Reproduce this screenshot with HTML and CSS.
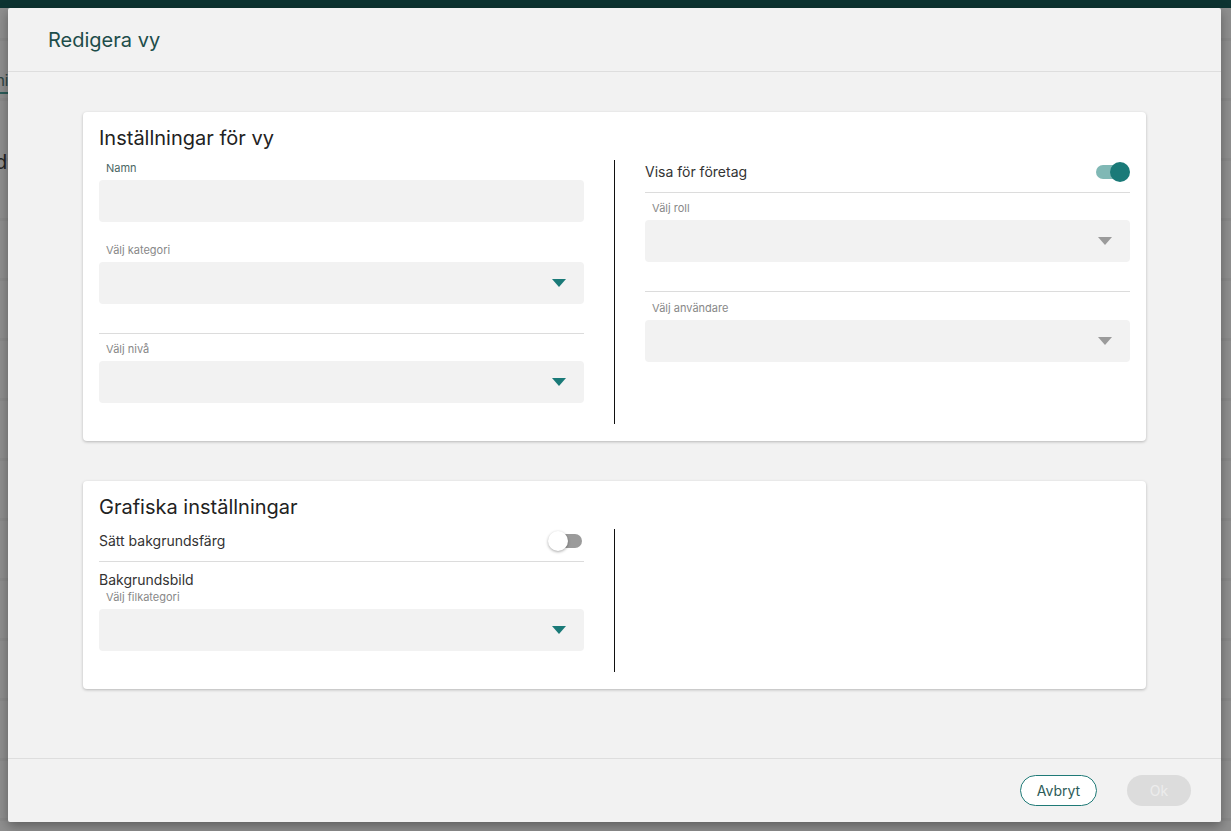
FILE: index.html
```html
<!DOCTYPE html>
<html lang="sv">
<head>
<meta charset="utf-8">
<title>Redigera vy</title>
<link rel="stylesheet" href="styles.css">
</head>
<body>
<div class="page">
  <div class="topbar"></div>
  <div class="behind">
    <span class="frag frag-t">t</span>
    <span class="frag frag-ni">ni</span>
    <span class="frag frag-d">d</span>
  </div>
</div>

<div class="modal">
  <div class="modal-header">Redigera vy</div>
  <div class="modal-body">
    <section class="card">
      <h2 class="card-title">Inställningar för vy</h2>
      <div class="card-row">
        <div class="col">
          <div class="field">
            <div class="label label-focus">Namn</div>
            <div class="input"></div>
          </div>
          <div class="field field-lined">
            <div class="label">Välj kategori</div>
            <div class="input select"><span class="caret teal"></span></div>
          </div>
          <div class="field">
            <div class="label">Välj nivå</div>
            <div class="input select"><span class="caret teal"></span></div>
          </div>
        </div>
        <div class="divider"></div>
        <div class="col">
          <div class="toggle-row">
            <span class="toggle-text">Visa för företag</span>
            <span class="toggle on"><span class="knob"></span></span>
          </div>
          <div class="field field-lined">
            <div class="label">Välj roll</div>
            <div class="input select"><span class="caret gray"></span></div>
          </div>
          <div class="field field-after-line">
            <div class="label">Välj användare</div>
            <div class="input select"><span class="caret gray"></span></div>
          </div>
        </div>
      </div>
    </section>

    <section class="card">
      <h2 class="card-title">Grafiska inställningar</h2>
      <div class="card-row">
        <div class="col">
          <div class="toggle-row toggle-row-spaced">
            <span class="toggle-text">Sätt bakgrundsfärg</span>
            <span class="toggle off"><span class="knob"></span></span>
          </div>
          <div class="sub-title">Bakgrundsbild</div>
          <div class="field field-tight">
            <div class="label">Välj filkategori</div>
            <div class="input select"><span class="caret teal"></span></div>
          </div>
        </div>
        <div class="divider"></div>
        <div class="col"></div>
      </div>
    </section>
  </div>
  <div class="modal-footer">
    <button class="btn btn-outline">Avbryt</button>
    <button class="btn btn-disabled">Ok</button>
  </div>
</div>
</body>
</html>
```

FILE: styles.css
```css
* { box-sizing: border-box; }

html, body {
  margin: 0;
  height: 100%;
}

body {
  background: #8d8d8d;
  font-family: Inter, "Noto Sans", "Liberation Sans", sans-serif;
  overflow: hidden;
  position: relative;
}

.page {
  height: 100%;
}

.topbar {
  height: 8px;
  background: #0d3331;
}

.behind {
  position: relative;
  height: calc(100% - 8px);
  background:
    repeating-linear-gradient(180deg, #8f8f8f 0 30px, #8a8a8a 30px 33px, #8f8f8f 33px 60px);
}

.frag {
  position: absolute;
  left: -2px;
  color: #3a3a3a;
}

.frag-t {
  top: 28px;
  font-size: 14px;
  left: -5px;
  color: #555;
}

.frag-ni {
  top: 63px;
  font-size: 15px;
  left: -4px;
  color: #2b4543;
  padding-bottom: 2px;
  border-bottom: 2px solid #2b5c59;
}

.frag-d {
  top: 142px;
  font-size: 20px;
  left: -5px;
  color: #222;
}

.modal {
  position: absolute;
  left: 8px;
  top: 8px;
  width: 1213px;
  height: 814px;
  background: #f2f2f2;
  display: flex;
  flex-direction: column;
  box-shadow: 0 4px 12px rgba(0, 0, 0, 0.35);
  border-radius: 2px;
}

.modal-header {
  height: 64px;
  padding: 0 40px;
  display: flex;
  align-items: center;
  font-size: 20px;
  color: #1d4d4a;
  border-bottom: 1px solid #dedede;
}

.modal-body {
  flex: 1;
  padding: 40px 75px 0;
  display: flex;
  flex-direction: column;
  gap: 40px;
}

.card {
  background: #fff;
  border-radius: 4px;
  box-shadow: 0 1px 3px rgba(0, 0, 0, 0.25);
  padding: 14px 16px 17px 16px;
}

.card-title {
  margin: 0 0 10px;
  font-size: 20px;
  line-height: 24px;
  font-weight: 400;
  color: #222;
}

.card-row {
  display: flex;
  gap: 30px;
}

.col {
  flex: 1;
  padding-bottom: 21px;
}

.divider {
  width: 1px;
  background: #111;
}

.field-lined {
  border-bottom: 1px solid #dcdcdc;
  padding-bottom: 29px;
}

.field + .field {
  margin-top: 20px;
}

.field-lined + .field {
  margin-top: 7px;
}

.field-lined + .field-after-line {
  margin-top: 8px;
}

.label {
  font-size: 11px;
  line-height: 16px;
  color: #888;
  padding-left: 7px;
  margin-bottom: 4px;
}

.label-focus {
  color: #4b6664;
}

.input {
  height: 42px;
  background: #f2f2f2;
  border-radius: 4px;
  display: flex;
  align-items: center;
  justify-content: flex-end;
  padding-right: 18px;
}

.caret {
  width: 0;
  height: 0;
  border-left: 7.5px solid transparent;
  border-right: 7.5px solid transparent;
  border-top: 8px solid #1a7a78;
}

.caret.gray {
  border-top-color: #9b9b9b;
}

.toggle-row {
  height: 33px;
  padding-bottom: 9px;
  display: flex;
  align-items: center;
  justify-content: space-between;
  border-bottom: 1px solid #dcdcdc;
  margin-bottom: 7px;
}

.toggle-row-spaced {
  margin-bottom: 8px;
}

.toggle-text {
  font-size: 14px;
  color: #333;
}

.toggle {
  width: 36px;
  height: 20px;
  position: relative;
  display: inline-flex;
  align-items: center;
}

.toggle::before {
  content: "";
  position: absolute;
  left: 2px;
  right: 2px;
  height: 14px;
  border-radius: 7px;
  background: #80b8b5;
}

.toggle .knob {
  position: absolute;
  width: 20px;
  height: 20px;
  border-radius: 50%;
  top: 0;
}

.toggle.on .knob {
  right: 0;
  background: #1a7a78;
}

.toggle.off::before {
  background: #9b9b9b;
}

.toggle.off .knob {
  left: 0;
  background: #fff;
  box-shadow: 0 1px 3px rgba(0, 0, 0, 0.35);
}

.sub-title {
  font-size: 14px;
  color: #333;
  line-height: 20px;
}

.field-tight .label {
  line-height: 14px;
  margin-bottom: 5px;
}

.modal-footer {
  height: 64px;
  border-top: 1px solid #dedede;
  display: flex;
  align-items: center;
  justify-content: flex-end;
  gap: 30px;
  padding: 0 30px 0 0;
}

.btn {
  font-family: inherit;
  font-size: 14px;
  height: 31px;
  border-radius: 16px;
  cursor: pointer;
}

.btn-outline {
  width: 77px;
  background: #fff;
  border: 1px solid #1f7a77;
  color: #2d5b58;
}

.btn-disabled {
  width: 64px;
  background: #dcdcdc;
  border: none;
  color: #ececec;
}
```
